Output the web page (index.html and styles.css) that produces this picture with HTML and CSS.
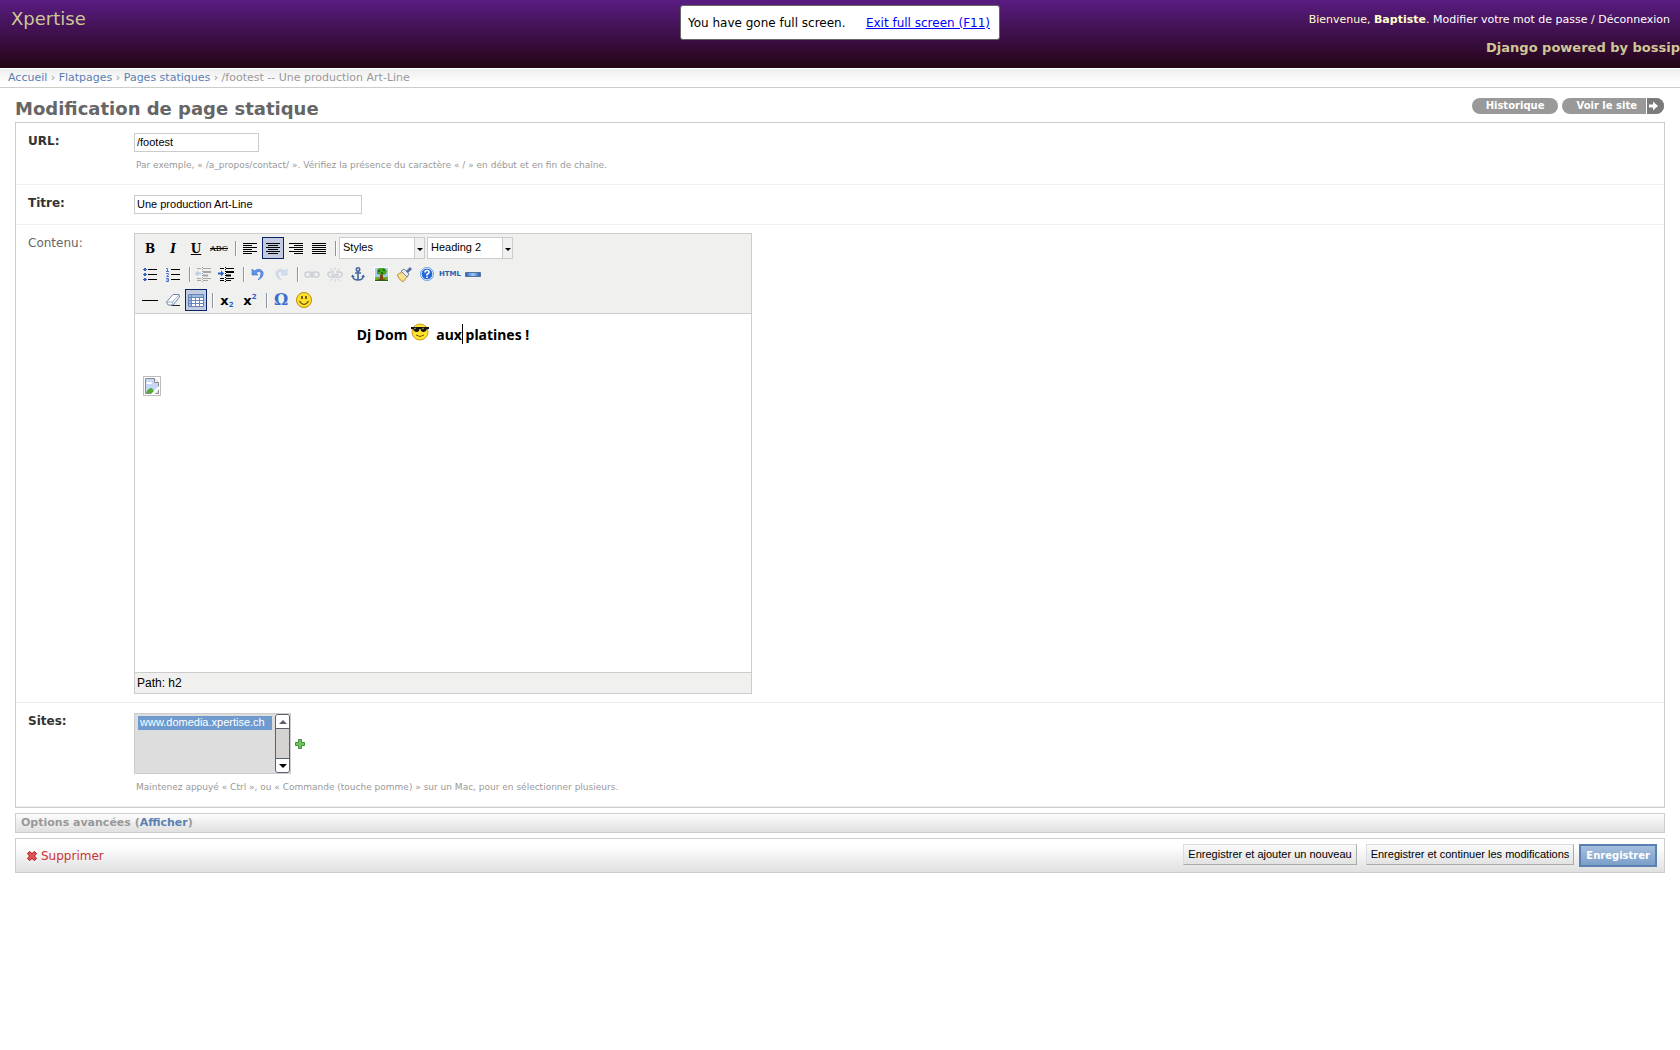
FILE: index.html
```html
<!DOCTYPE html>
<html lang="fr">
<head>
<meta charset="utf-8">
<title>Modification de page statique</title>
<link rel="stylesheet" href="styles.css">
</head>
<body>
<header class="header">
  <div class="site-name">Xpertise</div>
  <div class="header-right">
    <div class="user-tools">Bienvenue, <strong>Baptiste</strong>. <a href="#">Modifier votre mot de passe</a> / <a href="#">Déconnexion</a></div>
    <div class="powered">Django powered by bossip</div>
  </div>
  <div class="fullscreen-note"><span>You have gone full screen.</span> <a href="#">Exit full screen (F11)</a></div>
</header>
<nav class="breadcrumbs"><a href="#">Accueil</a> › <a href="#">Flatpages</a> › <a href="#">Pages statiques</a> › /footest -- Une production Art-Line</nav>
<main class="content">
  <div class="title-row">
    <h1>Modification de page statique</h1>
    <div class="object-tools">
      <a class="pill" href="#">Historique</a>
      <a class="pill pill-site" href="#"><span>Voir le site</span><svg class="pill-arrow" width="18" height="16" viewBox="0 0 18 16"><path d="M0 0H18V16H0z" fill="#7b7b7b"/><path d="M0 0H1V16H0z" fill="#fff"/><path d="M3 6.500H7V3.500L12 8L7 12.500V9.500H3z" fill="#fff"/></svg></a>
    </div>
  </div>
  <form>
    <section class="module">
      <div class="form-row row-url">
        <label class="required" for="url">URL:</label>
        <div class="field"><input class="text-url" id="url" type="text" value="/footest">
        <p class="help">Par exemple, « /a_propos/contact/ ». Vérifiez la présence du caractère « / » en début et en fin de chaîne.</p></div>
      </div>
      <div class="form-row">
        <label class="required" for="titre">Titre:</label>
        <div class="field"><input class="text-title" id="titre" type="text" value="Une production Art-Line"></div>
      </div>
      <div class="form-row row-editor">
        <span class="label" id="contenu-label">Contenu:</span>
        <div class="editor">
          <div class="toolbars">
            <div class="toolbar">
              <button type="button" class="tool glyph" aria-label="Gras">B</button>
              <button type="button" class="tool glyph italic" aria-label="Italique">I</button>
              <button type="button" class="tool glyph underline" aria-label="Souligné">U</button>
              <button type="button" class="tool glyph strike" aria-label="Barré">ABC</button>
              <i class="sep"></i>
              <button type="button" class="tool" aria-label="Gauche"><svg viewBox="0 0 20 20"><path d="M3 5.500H17M3 7.500H12M3 9.500H17M3 11.500H12M3 13.500H17M3 15.500H12" stroke="#000"/></svg></button>
              <button type="button" class="tool active" aria-label="Centrer"><svg viewBox="0 0 20 20"><path d="M3 5.500H17M5 7.500H15M3 9.500H17M5 11.500H15M3 13.500H17M5 15.500H15" stroke="#000"/></svg></button>
              <button type="button" class="tool" aria-label="Droite"><svg viewBox="0 0 20 20"><path d="M3 5.500H17M8 7.500H17M3 9.500H17M8 11.500H17M3 13.500H17M8 15.500H17" stroke="#000"/></svg></button>
              <button type="button" class="tool" aria-label="Justifier"><svg viewBox="0 0 20 20"><path d="M3 5.500H17M3 7.500H17M3 9.500H17M3 11.500H17M3 13.500H17M3 15.500H17" stroke="#000"/></svg></button>
              <i class="sep"></i>
              <div class="combo"><select aria-label="Styles"><option>Styles</option></select><span class="combo-arrow"></span></div>
              <div class="combo"><select aria-label="Format"><option>Heading 2</option></select><span class="combo-arrow"></span></div>
            </div>
            <div class="toolbar">
              <button type="button" class="tool" aria-label="Liste à puces"><svg viewBox="0 0 20 20"><path d="M8 5.500H17M8 10.500H17M8 15.500H17" stroke="#000"/><path d="M4 4h2v1h1v1h-1v1h-2v-1h-1v-1h1zM4 9h2v1h1v1h-1v1h-2v-1h-1v-1h1zM4 14h2v1h1v1h-1v1h-2v-1h-1v-1h1z" fill="#3464bd"/></svg></button>
              <button type="button" class="tool" aria-label="Liste numérotée"><svg viewBox="0 0 20 20"><path d="M8 5.500H17M8 10.500H17M8 15.500H17" stroke="#000"/><path d="M3 4.500H4.500V7.500M3 7.500H6M3 9.500H5.500V10.500L3.500 12.500H6M3 14.500H5.500V17.500H3M3.500 16H5.500" stroke="#4a76cc" fill="none"/></svg></button>
              <i class="sep"></i>
              <button type="button" class="tool dim" aria-label="Désindenter"><svg viewBox="0 0 20 20"><path d="M3 4.500H7M9 4.500H17M3 14.500H7M9 14.500H17M3 16.500H7M9 16.500H14" stroke="#000"/><path d="M9 8H17M9 11.500H14" stroke="#000" stroke-width="2"/><path d="M8.500 3V18" stroke="#000" stroke-dasharray="1 1"/><path d="M1 9.500L4 6.500V8.500H7V10.500H4V12.500z" fill="#3f75d0"/></svg></button>
              <button type="button" class="tool" aria-label="Indenter"><svg viewBox="0 0 20 20"><path d="M3 4.500H7M9 4.500H17M3 14.500H7M9 14.500H17M3 16.500H7M9 16.500H14" stroke="#000"/><path d="M9 8H17M9 11.500H14" stroke="#000" stroke-width="2"/><path d="M8.500 3V18" stroke="#000" stroke-dasharray="1 1"/><path d="M7 9.500L4 6.500V8.500H1V10.500H4V12.500z" fill="#2460c8"/></svg></button>
              <i class="sep"></i>
              <button type="button" class="tool" aria-label="Annuler"><svg viewBox="0 0 20 20"><path d="M4 5V11H10L8 9Q12 6 13 9Q13 13 10 16Q16 13 15 8Q12 3 6 7z" fill="#5e93e6" stroke="#3b70c8" stroke-width=".6"/></svg></button>
              <button type="button" class="tool dim" aria-label="Rétablir"><svg viewBox="0 0 20 20"><path d="M16 5V11H10L12 9Q8 6 7 9Q7 13 10 16Q4 13 5 8Q8 3 14 7z" fill="#8fb3ec" stroke="#4e80ce" stroke-width=".6"/></svg></button>
              <i class="sep"></i>
              <button type="button" class="tool dim" aria-label="Lien"><svg viewBox="0 0 20 20"><g fill="none" stroke="#7786a4" stroke-width="1.600"><rect x="3" y="8" width="7" height="5" rx="2.500"/><rect x="10" y="8" width="7" height="5" rx="2.500"/><path d="M7 10.500H13"/></g></svg></button>
              <button type="button" class="tool dim" aria-label="Supprimer le lien"><svg viewBox="0 0 20 20"><g fill="none" stroke="#7786a4" stroke-width="1.600"><path d="M9 8H5.500a2.500 2.500 0 0 0 0 5H9V10.500H6M11 8h3.500a2.500 2.500 0 0 1 0 5H11V10.500H14"/><path d="M10 3V6M5 4L8 7M15 4L12 7M10 15V18M5 17L8 14M15 17L12 14" stroke-width="1"/></g></svg></button>
              <button type="button" class="tool" aria-label="Ancre"><svg viewBox="0 0 20 20"><g fill="none" stroke="#4568a0" stroke-width="1.600"><circle cx="10" cy="5.500" r="1.700"/><path d="M10 7.500V16M7 9H13M4.500 12Q5 16 10 16Q15 16 15.500 12"/></g><path d="M3 13L4.500 10.500L7 13zM13 13L15.500 10.500L17 13z" fill="#4568a0"/></svg></button>
              <button type="button" class="tool" aria-label="Image"><svg viewBox="0 0 20 20"><path d="M3 3H18V18H3z" fill="#fff"/><path d="M4 4H17V14H4z" fill="#a8c8f0"/><path d="M4 13H17V17H4z" fill="#67af24"/><path d="M4 16H17V17H4z" fill="#276012"/><path d="M9 10H12V15H14V16H7V15H9z" fill="#7d4818"/><path d="M6 6L8 4H13L16 7L15 10L12 11L6 10z" fill="#48a51f"/><path d="M7 6h2v2H7zM12 5h2v2h-2zM10 8h2v2h-2z" fill="#226b0c"/></svg></button>
              <button type="button" class="tool" aria-label="Nettoyer"><svg viewBox="0 0 20 20"><path d="M3 11L9 7L14 12L9 18Q5 16 3 11z" fill="#f2d980" stroke="#a2822f" stroke-width=".7"/><path d="M7 7L10 5L15 10L13 13z" fill="#e8eaf0" stroke="#7784a4"/><path d="M12 7L16 3L18 5L14 9z" fill="#526ea8"/><path d="M5 11L10 15M8 10L12 13" stroke="#fff1b5"/></svg></button>
              <button type="button" class="tool" aria-label="Aide"><svg viewBox="0 0 20 20"><circle cx="10" cy="10" r="6.500" fill="#2568d8" stroke="#6b9eea"/><circle cx="10" cy="10" r="5.800" fill="none" stroke="#fff" stroke-width=".8"/><path d="M8 8.500Q8 6.500 10 6.500Q12.300 6.500 12 8.500Q11.500 9.500 10 10.500V11.500M10 12.500V14" fill="none" stroke="#fff" stroke-width="1.600"/></svg></button>
              <button type="button" class="tool html" aria-label="Code HTML">HTML</button>
              <button type="button" class="tool" aria-label="Ligne"><svg viewBox="0 0 20 20"><defs><linearGradient id="bar"><stop stop-color="#245cb8"/><stop offset=".5" stop-color="#a2caff"/><stop offset="1" stop-color="#2459af"/></linearGradient></defs><path d="M2.500 8.500H17.500V12.500H2.500z" fill="url(#bar)" stroke="#55739f"/></svg></button>
            </div>
            <div class="toolbar">
              <button type="button" class="tool" aria-label="Filet"><svg viewBox="0 0 20 20"><path d="M2 10.500H18" stroke="#000"/></svg></button>
              <button type="button" class="tool" aria-label="Effacer la mise en forme"><svg viewBox="0 0 20 20"><path d="M8 15.500H17" stroke="#222"/><path d="M3.500 12L10 4.500H16L16.500 7L10 15H5z" fill="#fff" stroke="#7187b0"/><path d="M3.500 12H9.500L16 5M9.500 12L10 15" fill="none" stroke="#9aadcb"/></svg></button>
              <button type="button" class="tool active" aria-label="Tableau"><svg viewBox="0 0 20 20"><path d="M2.500 4.500H17.500V16.500H2.500z" fill="#fff" stroke="#6382b8"/><path d="M3 5H17V7H3zM3 5H5V16H3z" fill="#9eb8df"/><path d="M3 7.500H17M3 10.500H17M3 13.500H17M5.500 5V16M9.500 7V16M13.500 7V16" stroke="#6687bd"/></svg></button>
              <i class="sep"></i>
              <button type="button" class="tool script" aria-label="Indice">x<span class="low">2</span></button>
              <button type="button" class="tool script" aria-label="Exposant">x<span class="high">2</span></button>
              <i class="sep"></i>
              <button type="button" class="tool omega" aria-label="Caractère spécial">Ω</button>
              <button type="button" class="tool" aria-label="Émoticône"><svg viewBox="0 0 20 20"><circle cx="10" cy="10" r="7.500" fill="#ffe12c" stroke="#bd8d08"/><path d="M8 6V9M12 6V9" stroke="#55400b" stroke-width="1.600"/><path d="M5.500 11Q10 18 14.500 11" fill="none" stroke="#6b5006" stroke-width="1.200"/></svg></button>
            </div>
          </div>
          <div class="edit-area" contenteditable="true" role="textbox" aria-labelledby="contenu-label">
            <h2>Dj Dom <svg class="cool" width="18" height="18" viewBox="0 0 18 18"><circle cx="9" cy="9" r="8" fill="#ffe22b" stroke="#ca9d22"/><path d="M0 4H18V6L16 6Q15 9 12 9Q10 9 9.500 6H8.500Q8 9 6 9Q3 9 2 6L0 6z" fill="#151515"/><path d="M3 6L5 5M11 6L13 5" stroke="#9d9d9d"/><path d="M5 12Q9 15 13 12" fill="none" stroke="#725008"/></svg>&nbsp; aux<span class="caret"></span> platines !</h2>
            <svg class="broken" width="18" height="20" viewBox="0 0 18 20"><path d="M.5.500H17.500V19.500H.5z" fill="#fff" stroke="#bbb"/><path d="M2.500 2.500H11.500L15.500 6.500V17.500H2.500z" fill="#c5d7f6" stroke="#8b8b8b"/><path d="M3 8Q4 5 6 6Q9 5 9 8z" fill="#fff"/><path d="M3 17Q5 12 9 12L12 17z" fill="#55ab30"/><path d="M11.500 2.500V6.500H15.500" fill="#fff" stroke="#8b8b8b"/><path d="M8 18L16 10V13L12 18z" fill="#fff"/></svg>
          </div>
          <div class="status">Path: h2</div>
        </div>
      </div>
      <div class="form-row row-sites">
        <label class="required" for="sites">Sites:</label>
        <div class="field">
          <div class="sites-line">
            <div class="list-box">
              <select id="sites" multiple size="4"><option selected>www.domedia.xpertise.ch</option></select>
              <div class="scroll"><span class="scroll-btn up"></span><span class="scroll-btn down"></span></div>
            </div>
            <a href="#" class="add" aria-label="Ajouter"><svg width="10" height="10" viewBox="0 0 10 10"><path d="M3.500.500H6.500V3.500H9.500V6.500H6.500V9.500H3.500V6.500H.5V3.500H3.500z" fill="#6dc45f" stroke="#3e9138"/></svg></a>
          </div>
          <p class="help">Maintenez appuyé « Ctrl », ou « Commande (touche pomme) » sur un Mac, pour en sélectionner plusieurs.</p>
        </div>
      </div>
    </section>
    <h2 class="collapsed">Options avancées (<a href="#">Afficher</a>)</h2>
    <div class="submit-row">
      <a href="#" class="delete"><svg width="10" height="10" viewBox="0 0 10 10"><path d="M.5 2.500L2.500.500L5 2.500L7.500.500L9.500 2.500L7.500 5L9.500 7.500L7.500 9.500L5 7.500L2.500 9.500L.5 7.500L2.500 5z" fill="#e15252" stroke="#a51d1d"/></svg>Supprimer</a>
      <div class="buttons">
        <button type="button" class="btn">Enregistrer et ajouter un nouveau</button>
        <button type="button" class="btn">Enregistrer et continuer les modifications</button>
        <button type="submit" class="btn-default">Enregistrer</button>
      </div>
    </div>
  </form>
</main>
</body>
</html>
```
FILE: styles.css
```css
* { box-sizing: border-box; }
body { margin: 0; background: #fff; color: #333; font: 12px/16px "DejaVu Sans", Verdana, sans-serif; }
a { color: #5b80b2; text-decoration: none; }
button, input, select { font: 11px/13px "Liberation Sans", Arial, sans-serif; color: #000; margin: 0; }

.header { position: relative; display: flex; justify-content: space-between; height: 68px; background: linear-gradient(#591c82, #240414); color: #ffc; }
.site-name { padding: 8px 11px; font-size: 18px; line-height: 21px; color: #cfc795; }
.header-right { display: flex; flex-direction: column; align-items: flex-end; }
.user-tools { padding: 12px 10px 0 0; font-size: 11px; line-height: 15px; }
.user-tools a { color: #fff; }
.powered { margin-top: 13px; font-size: 13px; font-weight: bold; color: #cfc795; }
.fullscreen-note { position: absolute; top: 5px; left: 50%; transform: translateX(-50%); display: flex; justify-content: space-between; width: 320px; height: 35px; padding: 9px 9px 0 7px; border: 1px solid #666; border-radius: 3px; background: #fff; color: #000; white-space: nowrap; }
.fullscreen-note a { color: #00f; text-decoration: underline; }

.breadcrumbs { height: 20px; padding: 1px 8px 0; border-top: 1px solid #fff; border-bottom: 1px solid #ccc; background: linear-gradient(#eee, #fff 80%); font-size: 11px; line-height: 15px; color: #999; }

.content { padding: 0 15px; }
.title-row { display: flex; justify-content: space-between; height: 34px; }
h1 { margin: 0; padding-top: 10px; font-size: 18px; line-height: 22px; color: #666; }
.object-tools { display: flex; gap: 4px; padding: 10px 1px 0 0; }
.pill { display: flex; height: 16px; padding: 0 14px; border-radius: 8px; overflow: hidden; background: #999; color: #fff; font-size: 10px; font-weight: bold; line-height: 15px; }
.pill-site { gap: 9px; padding-right: 0; }

.module { border: 1px solid #ccc; }
.form-row { display: flex; padding: 10px 12px; border-bottom: 1px solid #eee; }
.row-url { padding-bottom: 12px; }
.row-editor { padding: 8px 12px; }
.row-sites { padding-bottom: 12px; }
.form-row > label, .label { width: 106px; color: #666; line-height: 16px; }
.form-row > label.required { font-weight: bold; color: #333; }
.label { padding-top: 2px; }
.field input { display: block; height: 19px; padding: 0 2px 2px; border: 1px solid #ccc; background: #fff; }
.text-url { width: 125px; }
.text-title { width: 228px; }
.help { margin: 6px 0 0; padding-left: 2px; font-size: 9px; line-height: 14px; color: #999; }

.editor { width: 618px; border: 1px solid #ccc; background: #f0f0ee; }
.toolbars { display: flex; flex-direction: column; gap: 4px; padding: 3px 4px 2px; }
.toolbar { display: flex; height: 22px; }
.tool { flex: none; display: flex; align-items: center; justify-content: center; width: 22px; height: 22px; margin-right: 1px; padding: 0; border: 1px solid transparent; background: none; }
.tool svg { width: 20px; height: 20px; }
.tool.active { border-color: #0a246a; background: #c2cbe0; }
.dim { opacity: .3; }
.glyph { padding-top: 2px; font: bold 12px/18px "DejaVu Serif", serif; }
.italic { font-style: italic; }
.underline { text-decoration: underline; }
.strike { font: 8px/18px "DejaVu Serif", serif; text-decoration: line-through; }
.html { font: bold 7px/20px "DejaVu Sans", sans-serif; color: #2c5fae; }
.script { padding-top: 1px; font: bold 13px/18px "DejaVu Sans", sans-serif; }
.script span { font-size: 7px; line-height: 8px; color: #2c5fc6; }
.low { align-self: flex-end; padding-bottom: 1px; }
.high { align-self: flex-start; padding-top: 2px; }
.omega { font: bold 16px/20px "DejaVu Serif", serif; color: #3a6fd0; }
.sep { flex: none; width: 2px; height: 15px; margin: 4px 2px 0 4px; border-left: 1px solid #8d93a3; background: #fff; }
.combo { display: flex; width: 86px; height: 22px; margin-right: 2px; border: 1px solid #ccc; background: #fff; }
.combo select { flex: 1; min-width: 0; padding: 0 3px 2px; border: 0; appearance: none; background: none; }
.combo-arrow { display: flex; align-items: center; justify-content: center; width: 10px; border-left: 1px solid #ccc; background: #f0f0ee; }
.combo-arrow::before { content: ""; margin-top: 2px; border: 3px solid transparent; border-top-color: #000; border-bottom: 0; }
.edit-area { height: 360px; padding: 9px 8px; border-top: 1px solid #ccc; border-bottom: 1px solid #ccc; background: #fff; color: #000; outline: 0; }
.edit-area h2 { margin: 0 0 30px; font: bold 14px/22px "Noto Sans", sans-serif; text-align: center; }
.cool { vertical-align: -1px; }
.caret { display: inline-block; width: 1px; height: 20px; margin-right: -1px; background: #000; vertical-align: -4px; }
.broken { display: block; }
.status { height: 20px; padding: 2px; color: #000; font: 12px/16px "Liberation Sans", Arial, sans-serif; }

.sites-line { display: flex; align-items: center; gap: 4px; }
.list-box { display: flex; width: 157px; height: 61px; border: 1px solid #ccc; background: #ddd; }
.list-box select { flex: 1; min-width: 0; padding: 2px 3px; border: 0; background: #ddd; overflow: hidden; outline: 0; }
.list-box option { min-height: 14px; padding: 0 2px; line-height: 14px; }
.list-box option:checked { background: #6f9acd linear-gradient(#6f9acd, #6f9acd); color: #fff; -webkit-text-fill-color: #fff; }
.scroll { display: flex; flex-direction: column; justify-content: space-between; width: 15px; border: 1px solid #5a5f70; border-radius: 3px; background: #d5d3d2; overflow: hidden; }
.scroll-btn { display: flex; align-items: center; justify-content: center; height: 14px; background: #fff; }
.scroll-btn::before { content: ""; border: 4px solid transparent; }
.up { border-bottom: 1px solid #5a5f70; }
.up::before { border-top: 0; border-bottom-color: #5a5f70; }
.down { border-top: 1px solid #5a5f70; }
.down::before { border-bottom: 0; border-top-color: #000; }
.add { display: flex; }

.collapsed { height: 20px; margin: 5px 0; padding: 0 5px; border: 1px solid #ccc; background: linear-gradient(#fcfcfc, #e0e0e0); color: #999; font-size: 11px; line-height: 17px; }
.submit-row { display: flex; justify-content: space-between; height: 35px; padding: 5px 7px 0 11px; border: 1px solid #ccc; background: linear-gradient(#fff 20%, #e0e0e0); }
.delete { display: flex; align-items: center; gap: 4px; height: 24px; color: #c33; }
.buttons { display: flex; align-items: flex-start; }
.btn { height: 21px; margin-right: 9px; padding: 0 4px 1px; border: 1px solid; border-color: #ddd #aaa #aaa #ddd; background: linear-gradient(#fafafa, #e2e2e2); }
.btn + .btn { margin-right: 5px; }
.btn-default { height: 23px; padding: 0 5px; border: 2px solid #5b80b2; background: linear-gradient(#a5bfdd, #7b9fc9); color: #fff; font: bold 10px/16px "DejaVu Sans", Verdana, sans-serif; }
```
